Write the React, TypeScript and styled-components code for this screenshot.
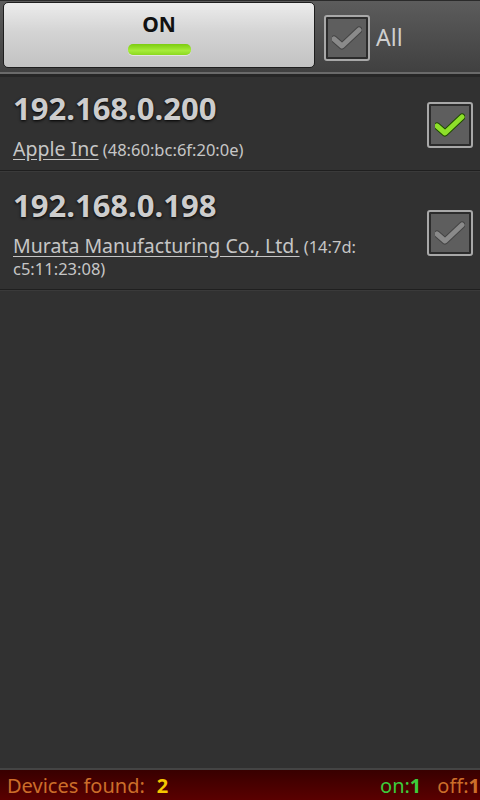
import styled, { createGlobalStyle } from "styled-components";

const GlobalStyle = createGlobalStyle`
  html, body {
    margin: 0;
    padding: 0;
    background: #313131;
  }
  body {
    font-family: "Noto Sans", "Open Sans", "DejaVu Sans", sans-serif;
  }
`;

const Screen = styled.div`
  width: 480px;
  height: 800px;
  display: flex;
  flex-direction: column;
  background: #313131;
  overflow: hidden;
`;

const Header = styled.div`
  height: 74px;
  box-sizing: border-box;
  display: flex;
  align-items: flex-start;
  padding: 1px 0 0 3px;
  background: linear-gradient(#5c5c5c, #404040);
  border-top: 1px solid #2a2a2a;
  border-bottom: 2px solid #6a6a6a;
  box-shadow: 0 3px 0 #262626;
`;

const ToggleButton = styled.button`
  width: 312px;
  height: 66px;
  box-sizing: border-box;
  border: 1px solid #1e1e1e;
  border-radius: 5px;
  background: linear-gradient(#ececec 0%, #d4d4d4 45%, #c2c2c2 100%);
  display: flex;
  flex-direction: column;
  align-items: center;
  padding: 8px 0 0;
  font-family: inherit;
`;

const ToggleLabel = styled.span`
  font-size: 21px;
  font-weight: 700;
  color: #111;
  line-height: 26px;
`;

const Indicator = styled.span<{ $on: boolean }>`
  margin-top: 7px;
  width: 63px;
  height: 11px;
  border-radius: 5px;
  background: ${(p) =>
    p.$on ? "linear-gradient(#7ccc10, #a6ec3a 60%, #8cd820)" : "#888"};
  box-shadow: 0 1px 0 rgba(255, 255, 255, 0.5);
`;

const AllWrap = styled.label`
  display: flex;
  align-items: center;
  margin: 13px 0 0 9px;
  gap: 6px;
`;

const AllLabel = styled.span`
  font-size: 23px;
  color: #cfcfcf;
  margin-top: -3px;
`;

const Box = styled.span`
  width: 46px;
  height: 46px;
  box-sizing: border-box;
  border: 2px solid #a8a8a8;
  border-radius: 3px;
  display: flex;
  align-items: center;
  justify-content: center;
  background: #2c2c2c;
`;

const BoxInner = styled.span`
  width: 38px;
  height: 38px;
  background: #5e5e5e;
  display: flex;
  align-items: center;
  justify-content: center;
`;

const List = styled.div`
  flex: 1;
  display: flex;
  flex-direction: column;
`;

const Row = styled.div`
  display: flex;
  align-items: center;
  padding: 14px 7px 9px 13px;
  border-bottom: 1px solid #1f1f1f;
  box-shadow: 0 1px 0 #3a3a3a;
`;

const RowText = styled.div`
  flex: 1;
  display: flex;
  flex-direction: column;
`;

const Ip = styled.div`
  font-size: 31px;
  font-weight: 700;
  color: #cdcdcd;
  line-height: 40px;
  text-shadow: 0 1px 3px #000;
`;

const Vendor = styled.div`
  margin-top: 10px;
  color: #c6c6c6;
  line-height: 22px;
  max-width: 350px;
`;

const VendorName = styled.span`
  font-size: 19.5px;
  text-decoration: underline;
  text-underline-offset: 3px;
`;

const Mac = styled.span`
  font-size: 16.5px;
`;

const Footer = styled.div`
  height: 32px;
  box-sizing: border-box;
  border-top: 2px solid #444;
  background: linear-gradient(#380000, #5a0000);
  display: flex;
  align-items: center;
  padding: 0 0 0 7px;
  font-size: 20px;
  color: #cc6e2a;
  white-space: nowrap;
`;

const Count = styled.span<{ $color: string }>`
  color: ${(p) => p.$color};
  font-weight: 700;
  margin-left: ${(p) => (p.$color === "#f5c800" ? "12px" : "0")};
`;

const OnCount = styled.span`
  color: #3ccc3c;
  margin-right: 16px;
`;

const Spacer = styled.span`
  flex: 1;
`;

const Check = ({ on }: { on: boolean }) => (
  <svg width="30" height="24" viewBox="0 0 30 24">
    <path
      d="M2 13 L10 20 L27 4"
      fill="none"
      stroke={on ? "#1f4a00" : "#444"}
      strokeWidth="7"
      strokeLinecap="round"
      strokeLinejoin="round"
    />
    <path
      d="M2 13 L10 20 L27 4"
      fill="none"
      stroke={on ? "#8ee02a" : "#8a8a8a"}
      strokeWidth="5"
      strokeLinecap="round"
      strokeLinejoin="round"
    />
  </svg>
);

const CheckBox = ({ on }: { on: boolean }) => (
  <Box>
    <BoxInner>
      <Check on={on} />
    </BoxInner>
  </Box>
);

const devices = [
  { ip: "192.168.0.200", vendor: "Apple Inc", mac: "48:60:bc:6f:20:0e", on: true },
  {
    ip: "192.168.0.198",
    vendor: "Murata Manufacturing Co., Ltd.",
    mac: "14:7d:c5:11:23:08",
    on: false,
  },
];

const MacText = ({ mac }: { mac: string }) => {
  const parts = mac.split(":");
  return (
    <Mac>
      (
      {parts.map((p, i) => (
        <span key={i}>
          {p}
          {i < parts.length - 1 ? ":" : ""}
          {i < parts.length - 1 && <wbr />}
        </span>
      ))}
      )
    </Mac>
  );
};

export default function App() {
  return (
    <Screen>
      <GlobalStyle />
      <Header>
        <ToggleButton>
          <ToggleLabel>ON</ToggleLabel>
          <Indicator $on />
        </ToggleButton>
        <AllWrap>
          <CheckBox on={false} />
          <AllLabel>All</AllLabel>
        </AllWrap>
      </Header>
      <List>
        {devices.map((d) => (
          <Row key={d.ip}>
            <RowText>
              <Ip>{d.ip}</Ip>
              <Vendor>
                <VendorName>{d.vendor}</VendorName> <MacText mac={d.mac} />
              </Vendor>
            </RowText>
            <CheckBox on={d.on} />
          </Row>
        ))}
      </List>
      <Footer>
        Devices found:<Count $color="#f5c800">2</Count>
        <Spacer />
        <OnCount>
          on:<Count $color="#3ccc3c">1</Count>
        </OnCount>
        off:<Count $color="#cc6e2a">1</Count>
      </Footer>
    </Screen>
  );
}
